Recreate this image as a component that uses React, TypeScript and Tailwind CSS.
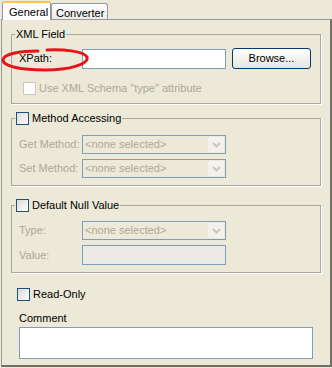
import React from "react"

const font = { fontFamily: '"Liberation Sans", Arial, sans-serif' }

function Check({ disabled }: { disabled?: boolean }) {
  return (
    <span
      className={
        disabled
          ? "inline-block h-[13px] w-[13px] shrink-0 border border-[#CAC8BB] bg-white"
          : "inline-block h-[13px] w-[13px] shrink-0 border border-[#1C5180] bg-gradient-to-br from-[#DCDBD5] to-white"
      }
    />
  )
}

function Combo() {
  return (
    <div className="flex h-[19px] w-[144px] items-center border border-[#7F9DB9] bg-[#ECE9D8] p-[1px]">
      <span className="flex-1 pl-[1px] leading-none text-[#ACA899]">&lt;none selected&gt;</span>
      <span className="flex h-full w-[16px] items-center justify-center rounded-[2px] bg-[#F2F1EC]">
        <svg width="9" height="6" viewBox="0 0 9 6">
          <path d="M1 1 L4.5 4.5 L8 1" stroke="#C9C7BA" strokeWidth="2" fill="none" />
        </svg>
      </span>
    </div>
  )
}

function Group({ legend, children, className }: { legend: React.ReactNode; children: React.ReactNode; className?: string }) {
  return (
    <fieldset className={"w-[310px] border border-[#ACA899] shadow-[1px_1px_0_#fff] " + (className || "")}>
      <legend className="ml-[3px] px-[1px] leading-[13px]">{legend}</legend>
      {children}
    </fieldset>
  )
}

export default function App() {
  return (
    <div className="relative h-[368px] w-[332px] overflow-hidden bg-[#ECE9D8] text-[11px] text-black" style={font}>
      {/* tabs */}
      <div className="flex h-[19px] items-end pl-[2px]">
        <div className="relative z-10 mb-[-1px] flex h-[19px] w-[49px] items-start rounded-t-[3px] border border-b-0 border-[#919B9C] border-t-[#FFC83C] border-t-2 bg-[#FCFCFE] pl-[6px] pt-[1px]">
          General
        </div>
        <div className="flex h-[16px] w-[57px] items-start rounded-t-[3px] border border-b-0 border-[#919B9C] bg-gradient-to-b from-white to-[#ECEBE6] pl-[4px] pt-[1px]">
          Converter
        </div>
      </div>

      {/* panel */}
      <div className="ml-[1px] h-[348px] w-[331px] border-t border-l border-[#919B9C] border-r-2 border-b-2 border-r-[#716F64] border-b-[#716F64] pl-[9px] pt-[8px]">
        <Group legend="XML Field" className="h-[76px]">
          <div className="mt-[7px] flex items-center pl-[7px]">
            <span className="w-[63px]">XPath:</span>
            <div className="h-[20px] w-[144px] border border-[#7F9DB9] bg-white" />
            <button className="ml-[6px] h-[21px] w-[79px] rounded-[3px] border border-[#003C74] bg-gradient-to-b from-white to-[#E6E5DE] text-[11px]">
              Browse...
            </button>
          </div>
          <div className="mt-[11px] flex items-center gap-[3px] pl-[11px] text-[#ACA899]">
            <Check disabled />
            <span>Use XML Schema "type" attribute</span>
          </div>
        </Group>

        <Group
          className="mt-[8px] h-[74px]"
          legend={
            <span className="flex items-center gap-[3px]">
              <Check />
              <span>Method Accessing</span>
            </span>
          }
        >
          <div className="mt-[10px] flex items-center pl-[7px] text-[#ACA899]">
            <span className="w-[63px]">Get Method:</span>
            <Combo />
          </div>
          <div className="mt-[5px] flex items-center pl-[7px] text-[#ACA899]">
            <span className="w-[63px]">Set Method:</span>
            <Combo />
          </div>
        </Group>

        <Group
          className="mt-[13px] h-[74px]"
          legend={
            <span className="flex items-center gap-[3px]">
              <Check />
              <span>Default Null Value</span>
            </span>
          }
        >
          <div className="mt-[9px] flex items-center pl-[7px] text-[#ACA899]">
            <span className="w-[63px]">Type:</span>
            <Combo />
          </div>
          <div className="mt-[5px] flex items-center pl-[7px] text-[#ACA899]">
            <span className="w-[63px]">Value:</span>
            <div className="h-[20px] w-[144px] border border-[#7F9DB9] bg-[#EBEAE4]" />
          </div>
        </Group>

        <div className="mt-[13px] flex items-center gap-[3px] pl-[6px]">
          <Check />
          <span>Read-Only</span>
        </div>
        <div className="mt-[9px] pl-[8px] leading-[13px]">Comment</div>
        <div className="ml-[8px] mt-[2px] h-[32px] w-[294px] border border-[#7F9DB9] bg-white" />
      </div>

      {/* hand-drawn red ellipse */}
      <svg className="pointer-events-none absolute left-0 top-0" width="332" height="368">
        <path
          d="M47 50 C62 49 84 51 87 57 C89 64 70 70 45 70 C20 70 3 66 3 60 C3 54 20 51 38 51"
          stroke="#E8141A"
          strokeWidth="3"
          fill="none"
          strokeLinecap="round"
        />
      </svg>
    </div>
  )
}
